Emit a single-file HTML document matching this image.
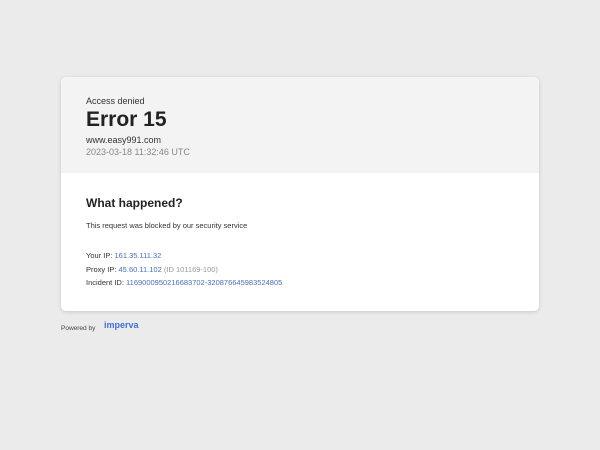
<!DOCTYPE html>
<html><head><style>
body{margin:0;width:600px;height:450px;background:#ebebeb;font-family:"Liberation Sans",sans-serif;position:relative;overflow:hidden}
.card{position:absolute;left:61px;top:77px;width:478px;height:234px;background:#fff;border-radius:5px;box-shadow:0 1px 4px rgba(0,0,0,.15);overflow:hidden}
.head{height:96px;background:#f3f3f3;position:relative}
.t{position:absolute;left:25px;white-space:nowrap}
</style></head><body>
<div class="card">
<div class="head">
<div class="t" style="top:19px;font-size:9px;color:#333">Access denied</div>
<div class="t" style="top:31px;font-size:21px;font-weight:bold;color:#222">Error 15</div>
<div class="t" style="top:58px;font-size:9px;color:#333">www.easy991.com</div>
<div class="t" style="top:70px;font-size:9px;color:#888">2023-03-18 11:32:46 UTC</div>
</div>
<div class="t" style="top:119px;font-size:12px;font-weight:bold;color:#222">What happened?</div>
<div class="t" style="top:144px;font-size:7.5px;color:#333">This request was blocked by our security service</div>
<div class="t" style="top:174px;font-size:7.5px;color:#333">Your IP: <span style="color:#4a6fb5">161.35.111.32</span></div>
<div class="t" style="top:188px;font-size:7.5px;color:#333">Proxy IP: <span style="color:#4a6fb5">45.60.11.102</span> <span style="color:#999">(ID 101169-100)</span></div>
<div class="t" style="top:201px;font-size:7.5px;color:#333">Incident ID: <span style="color:#4a6fb5">1169000950216683702-320876645983524805</span></div>
</div>
<div style="position:absolute;left:61px;top:325px;font-size:6.5px;color:#444">Powered by</div>
<div style="position:absolute;left:104px;top:320px;font-size:9px;font-weight:bold;color:#3f6fd0">imperva</div>
</body></html>
